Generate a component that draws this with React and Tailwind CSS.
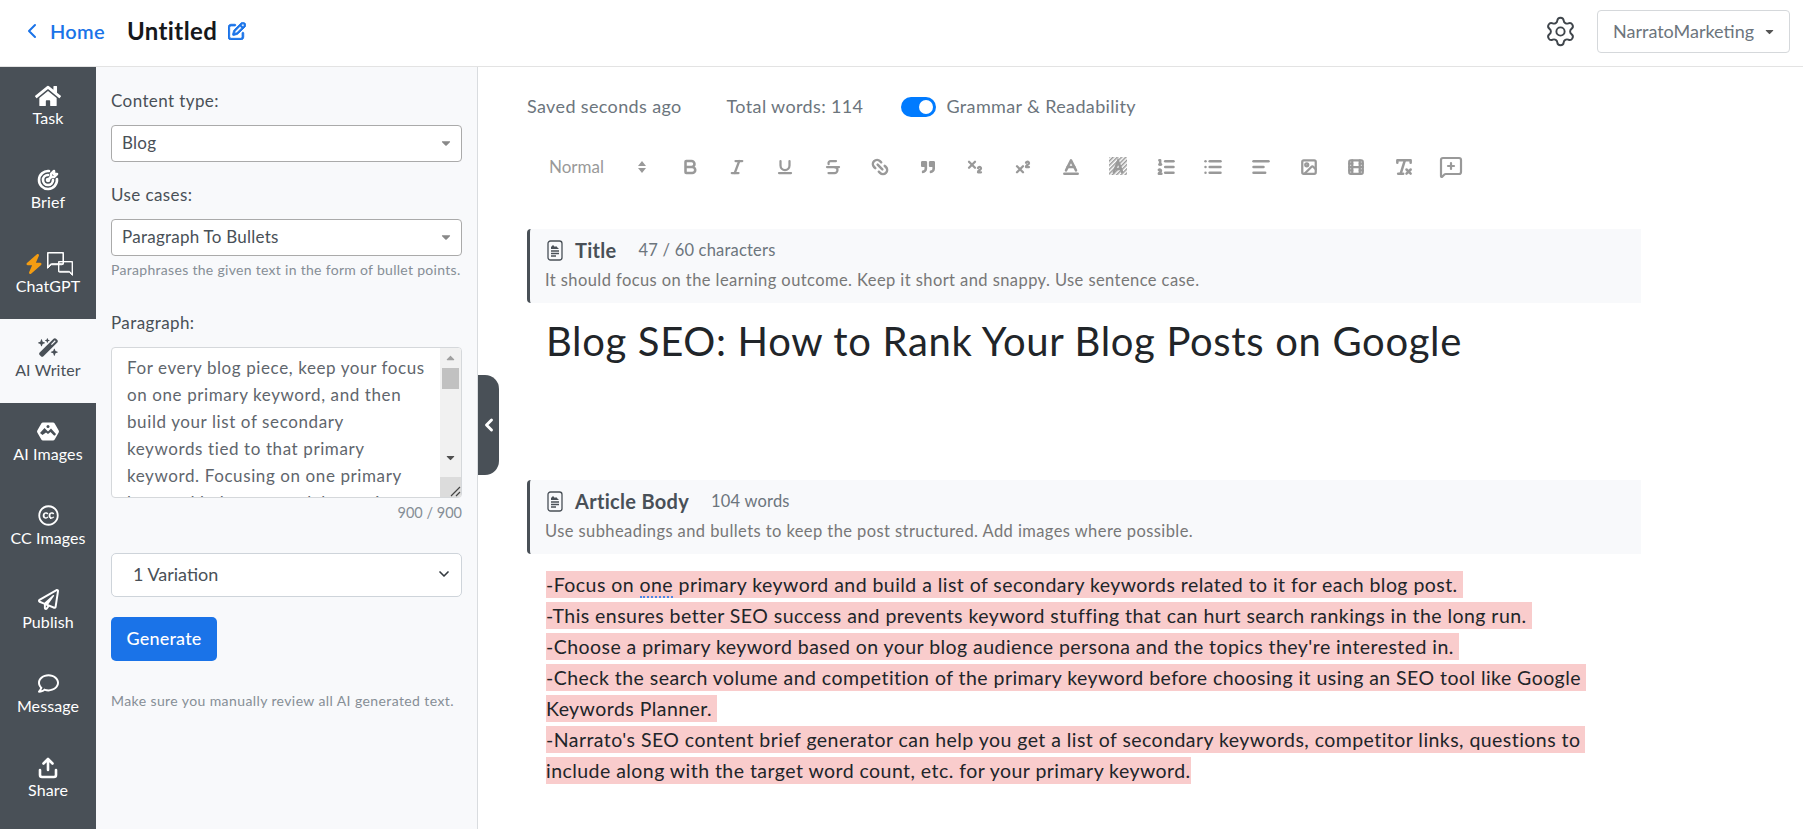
import React from "react";
import { ChevronLeft, ChevronDown, Bold, Italic, Underline, Strikethrough, Link2, Subscript, Superscript, Baseline, ListOrdered, List, AlignLeft, Image, Film, RemoveFormatting, MessageSquarePlus, Settings } from "lucide-react";
import { FaHome, FaCreativeCommons, FaRegPaperPlane, FaRegComment, FaQuoteRight, FaCaretDown } from "react-icons/fa";
import { FaWandMagicSparkles, FaRegPenToSquare, FaBolt } from "react-icons/fa6";
import { TbTargetArrow } from "react-icons/tb";
import { BsChatLeft } from "react-icons/bs";

const AiImagesIcon = () => (
    <svg width="24" height="22" viewBox="0 0 24 22">
        <path d="M7 1.5h10a2 2 0 0 1 1.7 1l4 7a2 2 0 0 1 0 2l-4 7a2 2 0 0 1-1.7 1H7a2 2 0 0 1-1.700-1l-4-7a2 2 0 0 1 0-2l4-7a2 2 0 0 1 1.700-1z" fill="#fff" />
        <path d="M4 12l4.500-5 3.500 3.500 3-3 5 5.500-1 1.500h-1l-3.500-3.500-2.500 2-2-1.500-3.500 2.500z" fill="#495057" />
        <circle cx="12" cy="5.500" r="1.500" fill="#495057" />
    </svg>
);

const ChatIcon = () => (
    <span className="relative inline-block w-[26px] h-[24px]">
        <BsChatLeft className="absolute left-0 top-0 text-white" size={17} strokeWidth={0.9} />
        <BsChatLeft className="absolute right-0 bottom-0 text-white -scale-x-100" size={15} strokeWidth={0.9} />
    </span>
);

const ShareIcon = () => (
    <svg width="20" height="22" viewBox="0 0 20 22" fill="none" stroke="#fff" strokeWidth="2.6" strokeLinecap="round" strokeLinejoin="round">
        <path d="M10 13V2.500M5.500 6.500 10 2l4.500 4.500" />
        <path d="M2 13v5a2 2 0 0 0 2 2h12a2 2 0 0 0 2-2v-5" />
    </svg>
);

const DocIcon = () => (
    <svg width="16" height="21" viewBox="0 0 16 21" fill="none" stroke="#495057" strokeWidth="1.3" className="shrink-0">
        <rect x="1" y="1" width="14" height="19" rx="2.500" />
        <path d="M4 11h8M4 13.500h8M4 16h5" />
        <path d="M4 9V7l2-2 2 2 1-1 3 3z" fill="#495057" stroke="none" />
    </svg>
);

const HatchIcon = () => (
    <svg width="20" height="20" viewBox="0 0 20 20">
        <defs>
            <pattern id="hatch" width="3" height="3" patternUnits="userSpaceOnUse" patternTransform="rotate(45)">
                <rect width="1.500" height="3" fill="#999" />
            </pattern>
        </defs>
        <rect x="1" y="0" width="18" height="18" fill="url(#hatch)" />
        <path d="M5.500 16 10 4l4.500 12M7 12h6" fill="none" stroke="#999" strokeWidth="2.400" />
    </svg>
);

const navItems = [
    { label: "Task", icon: <FaHome size={26} /> },
    { label: "Brief", icon: <TbTargetArrow size={24} strokeWidth={2.6} /> },
    { label: "ChatGPT", icon: <span className="flex items-center gap-[3px]"><FaBolt size={20} className="text-[#f39c12]" /><ChatIcon /></span> },
    { label: "AI Writer", icon: <FaWandMagicSparkles size={21} />, active: true },
    { label: "AI Images", icon: <AiImagesIcon /> },
    { label: "CC Images", icon: <FaCreativeCommons size={21} /> },
    { label: "Publish", icon: <FaRegPaperPlane size={21} /> },
    { label: "Message", icon: <FaRegComment size={21} /> },
    { label: "Share", icon: <ShareIcon /> },
];

const toolIcons = [
    <Bold size={18} strokeWidth={3.4} />,
    <Italic size={18} strokeWidth={3} />,
    <Underline size={18} strokeWidth={3} />,
    <Strikethrough size={18} strokeWidth={3} />,
    <Link2 size={20} strokeWidth={3} className="rotate-45" />,
    <FaQuoteRight size={14} />,
    <Subscript size={18} strokeWidth={3} />,
    <Superscript size={18} strokeWidth={3} />,
    <Baseline size={20} strokeWidth={3} />,
    <HatchIcon />,
    <ListOrdered size={20} strokeWidth={3} />,
    <List size={20} strokeWidth={3} />,
    <AlignLeft size={20} strokeWidth={3} />,
    <Image size={18} strokeWidth={3} />,
    <Film size={18} strokeWidth={3} />,
    <RemoveFormatting size={20} strokeWidth={3} />,
    <MessageSquarePlus size={24} strokeWidth={2.2} />,
];

const bodyLines = [
    { text: <>-Focus on <span className="border-b-2 border-dotted border-[#4a86e8]">one</span> primary keyword and build a list of secondary keywords related to it for each blog post.</>, pad: "pr-[5px]" },
    { text: "-This ensures better SEO success and prevents keyword stuffing that can hurt search rankings in the long run.", pad: "pr-[5px]" },
    { text: "-Choose a primary keyword based on your blog audience persona and the topics they're interested in.", pad: "pr-[5px]" },
    { text: "-Check the search volume and competition of the primary keyword before choosing it using an SEO tool like Google", pad: "pr-[5px]" },
    { text: "Keywords Planner.", pad: "pr-[5px]" },
    { text: "-Narrato's SEO content brief generator can help you get a list of secondary keywords, competitor links, questions to", pad: "pr-[5px]" },
    { text: "include along with the target word count, etc. for your primary keyword.", pad: "" },
];

const paragraphLines = [
    "For every blog piece, keep your focus",
    "on one primary keyword, and then",
    "build your list of secondary",
    "keywords tied to that primary",
    "keyword. Focusing on one primary",
    "keyword helps you rank better in",
];

const Banner = ({ title, meta, hint }) => (
    <div className="h-[74px] bg-[#f8f9fb] border-l-[3px] border-[#495057] rounded-l-[4px] pl-[15px] pt-[9px]">
        <div className="flex items-center h-[24px]">
            <span className="ml-[2px]"><DocIcon /></span>
            <span className="ml-[12px] text-[20px] tracking-[0.3px] font-bold text-[#495057]">{title}</span>
            <span className="ml-[22px] text-[16.500px] tracking-[0.2px] text-[#6c757d]">{meta}</span>
        </div>
        <div className="mt-[8px] text-[16.500px] tracking-[0.42px] leading-[20px] text-[#777]">{hint}</div>
    </div>
);

const FakeSelect = ({ value }) => (
    <div className="h-[37px] bg-white border border-[#aaa] rounded-[4px] flex items-center justify-between pl-[10px] pr-[8px] pb-[2px] text-[17px] tracking-[0.25px] text-[#495057]">
        <span>{value}</span>
        <FaCaretDown size={14} className="text-[#888]" />
    </div>
);

export default function App() {
    return (
        <div className="h-[829px] w-full overflow-hidden bg-white flex flex-col font-['Lato','Noto_Sans',sans-serif]">
            <header className="h-[67px] shrink-0 border-b border-[#e3e3e3] flex items-center pb-[4px] pl-[20px] pr-[13px]">
                <ChevronLeft size={24} strokeWidth={2} className="text-[#1a73e8]" />
                <span className="ml-[6px] text-[20px] tracking-[0.3px] font-semibold text-[#1a73e8]">Home</span>
                <span className="ml-[22px] text-[24px] tracking-[0.4px] font-bold text-[#16181b]">Untitled</span>
                <FaRegPenToSquare size={18} stroke="currentColor" strokeWidth={24} className="ml-[11px] text-[#1a73e8]" />
                <Settings size={33} strokeWidth={1.4} className="ml-auto text-[#3f454b]" />
                <div className="ml-[20px] w-[193px] h-[43px] border border-[#d5d8db] rounded-[4px] flex items-center justify-between pl-[15px] pr-[13px] text-[18px] text-[#6c757d]">
                    <span>NarratoMarketing</span>
                    <FaCaretDown size={13} className="text-[#555]" />
                </div>
            </header>

            <div className="flex flex-1 min-h-0">
                <nav className="w-[96px] shrink-0 bg-[#495057]">
                    {navItems.map((item) => (
                        <div key={item.label} className={`h-[84px] pt-[16px] flex flex-col items-center ${item.active ? "bg-[#f8f9fb] text-[#495057]" : "text-white"}`}>
                            <div className="h-[25px] flex items-center justify-center">{item.icon}</div>
                            <div className="text-[16px] tracking-[0.1px] leading-[20px] whitespace-nowrap">{item.label}</div>
                        </div>
                    ))}
                </nav>

                <aside className="w-[382px] shrink-0 bg-[#f8f9fb] border-r border-[#d9dcdf] pl-[15px] pr-[15px] pt-[22px] text-[#495057]">
                    <div className="text-[17px] tracking-[0.4px] leading-[24px] mb-[12px]">Content type:</div>
                    <FakeSelect value="Blog" />
                    <div className="mt-[21px] text-[17px] tracking-[0.4px] leading-[24px] mb-[12px]">Use cases:</div>
                    <FakeSelect value="Paragraph To Bullets" />
                    <div className="mt-[4px] text-[14px] tracking-[0.3px] leading-[20px] text-[#868e96] whitespace-nowrap">Paraphrases the given text in the form of bullet points.</div>
                    <div className="mt-[31px] text-[17px] tracking-[0.4px] leading-[24px] mb-[12px]">Paragraph:</div>
                    <div className="h-[151px] bg-white border border-[#d5d8db] rounded-[4px] overflow-hidden flex">
                        <div className="flex-1 pl-[15px] pt-[6px] text-[17px] tracking-[0.6px] leading-[27px] text-[#5f666d] whitespace-nowrap">
                            {paragraphLines.map((line) => <div key={line}>{line}</div>)}
                        </div>
                        <div className="w-[21px] shrink-0 bg-[#f1f1f1] flex flex-col items-center relative">
                            <FaCaretDown size={13} className="rotate-180 text-[#a0a0a0] mt-[4px]" />
                            <div className="w-[17px] h-[21px] bg-[#c1c1c1] mt-[3px]" />
                            <FaCaretDown size={13} className="text-[#505050] mt-[62px]" />
                            <div className="absolute bottom-0 left-0 w-[21px] h-[20px] bg-[#dcdcdc] flex items-end justify-end">
                                <svg width="12" height="12" viewBox="0 0 12 12" stroke="#444" strokeWidth="1.200"><path d="M2 11 11 2M7 11l4-4" /></svg>
                            </div>
                        </div>
                    </div>
                    <div className="mt-[5px] text-right text-[14.500px] leading-[20px] text-[#868e96]">900 / 900</div>
                    <div className="mt-[30px] h-[44px] bg-white border border-[#ced4da] rounded-[5px] flex items-center justify-between pl-[21px] pr-[9px] pb-[2px] text-[18px] text-[#495057]">
                        <span>1 Variation</span>
                        <ChevronDown size={16} strokeWidth={2.5} className="text-[#343a40]" />
                    </div>
                    <button className="mt-[20px] w-[106px] h-[44px] pb-[2px] bg-[#1a73e8] rounded-[5px] text-white text-[18px] tracking-[0.2px] font-medium">Generate</button>
                    <div className="mt-[30px] text-[14px] tracking-[0.4px] leading-[20px] text-[#868e96] whitespace-nowrap">Make sure you manually review all AI generated text.</div>
                </aside>

                <main className="relative flex-1 min-w-0 pl-[49px] pt-[29px]">
                    <button className="absolute left-0 top-[308px] w-[21px] h-[100px] bg-[#495057] rounded-r-[14px] flex items-center justify-center">
                        <ChevronLeft size={20} strokeWidth={3.5} className="text-white" />
                    </button>

                    <div className="w-[1114px]">
                        <div className="h-[22px] flex items-center text-[18px] tracking-[0.36px] text-[#6c757d]">
                            <span className="pb-[2px]">Saved seconds ago</span>
                            <span className="ml-[45px] pb-[2px]">Total words: 114</span>
                            <span className="ml-[38px] w-[35px] h-[20px] rounded-full bg-[#007bff] flex items-center justify-end pr-[3px]">
                                <span className="w-[14px] h-[14px] rounded-full bg-white" />
                            </span>
                            <span className="ml-[10px] pb-[2px]">Grammar &amp; Readability</span>
                        </div>

                        <div className="mt-[29px] h-[40px] flex items-center text-[#999]">
                            <div className="ml-[22px] w-[98px] flex items-center justify-between text-[17px]">
                                <span>Normal</span>
                                <svg width="10" height="14" viewBox="0 0 10 14" fill="#999"><path d="M5 1 9 6H1zM5 13 1 8h8z" /></svg>
                            </div>
                            <div className="flex items-center ml-[19px]">
                                {toolIcons.map((icon, i) => (
                                    <div key={i} className="w-[47.600px] flex justify-center">{icon}</div>
                                ))}
                            </div>
                        </div>

                        <div className="mt-[42px]">
                            <Banner title="Title" meta="47 / 60 characters" hint="It should focus on the learning outcome. Keep it short and snappy. Use sentence case." />
                        </div>
                        <div className="h-[177px] pl-[19px] pt-[14px] text-[40px] tracking-[0.66px] leading-[48px] text-[#212529]">Blog SEO: How to Rank Your Blog Posts on Google</div>
                        <Banner title="Article Body" meta="104 words" hint="Use subheadings and bullets to keep the post structured. Add images where possible." />

                        <div className="pl-[19px] pt-[17px] text-[19.500px] tracking-[0.45px] text-[#212529]">
                            {bodyLines.map((line, i) => (
                                <div key={i} className="h-[31px] whitespace-nowrap">
                                    <div className={`w-fit h-[27px] leading-[27px] bg-[#f9cccc] ${line.pad}`}>{line.text}</div>
                                </div>
                            ))}
                        </div>
                    </div>
                </main>
            </div>
        </div>
    );
}
